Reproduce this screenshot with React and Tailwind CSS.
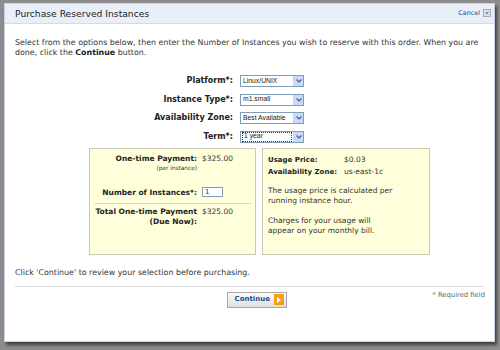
import React from "react";

function Select({ value, focused }) {
  return (
    <div className="flex h-[12px] w-[64px] items-stretch border border-[#7f9db9] bg-white">
      <div className="flex flex-1 items-center px-[1px]">
        <span
          className={
            focused
              ? "flex h-full w-full items-center border border-dotted border-[#333] px-[1px] leading-none"
              : "px-[1px] leading-none"
          }
        >
          {value}
        </span>
      </div>
      <div className="flex w-[10px] items-center justify-center border-l border-[#c3d3fd] bg-[#c9d8fc]">
        <svg width="6" height="4" viewBox="0 0 6 4">
          <path d="M0.5 0.5 L3 3 L5.5 0.5" fill="none" stroke="#4d6185" strokeWidth="1.2" />
        </svg>
      </div>
    </div>
  );
}

function FormRow({ label, value, focused }) {
  return (
    <div className="flex items-center">
      <div className="w-[225px] pr-[7px] text-right font-bold text-[8px] leading-[12px]">{label}</div>
      <div className="text-[6.8px] font-['Liberation_Sans',sans-serif]">
        <Select value={value} focused={focused} />
      </div>
    </div>
  );
}

export default function App() {
  return (
    <div className="h-[350px] w-[500px] overflow-hidden bg-[#8d8d8d] pl-[4px] pt-[3px] font-['DejaVu_Sans',sans-serif] text-[#333]">
      <div className="flex h-[339px] w-[491px] flex-col border border-[#c6d3e6] bg-white shadow-[2px_3px_3px_rgba(0,0,0,0.55)]">
        {/* Header */}
        <div className="flex h-[20px] items-center justify-between border-b border-[#cfdcee] bg-[#e9eff9] pl-[10px] pr-[3px]">
          <span className="text-[9.2px] text-[#222]">Purchase Reserved Instances</span>
          <div className="flex items-center gap-[3px]">
            <span className="text-[6.4px] text-[#1a4a8c]">Cancel</span>
            <span className="flex h-[8px] w-[8px] items-center justify-center border border-[#a9a9a9] bg-[#e4e4e4] text-[6px] leading-none text-[#555]">
              ×
            </span>
          </div>
        </div>

        {/* Body */}
        <div className="flex flex-1 flex-col px-[10px]">
          <p className="mt-[14px] whitespace-nowrap text-[7.9px] leading-[10px] text-[#333]">
            Select from the options below, then enter the Number of Instances you wish to reserve with this order. When you are
            <br />
            done, click the <b className="text-[#222]">Continue</b> button.
          </p>

          <div className="mt-[17px] flex flex-col gap-[6.5px] text-[#222]">
            <FormRow label="Platform*:" value="Linux/UNIX" />
            <FormRow label="Instance Type*:" value="m1.small" />
            <FormRow label="Availability Zone:" value="Best Available" />
            <FormRow label="Term*:" value="1 year" focused />
          </div>

          <div className="mt-[5px] ml-[74px] flex gap-[6px]">
            {/* Left box */}
            <div className="h-[107px] w-[167px] border border-[#c8c8b4] bg-[#ffffdc] pt-[5px] text-[7.5px] text-[#333]">
              <div className="flex">
                <div className="w-[107px] text-right">
                  <div className="font-bold leading-[10px] text-[#222]">One-time Payment:</div>
                  <div className="text-[5.8px] leading-[8px]">(per instance)</div>
                </div>
                <div className="pl-[5px] leading-[10px]">$325.00</div>
              </div>
              <div className="mt-[15px] flex items-center">
                <div className="w-[107px] text-right font-bold text-[#222]">Number of Instances*:</div>
                <div className="pl-[5px]">
                  <div className="flex h-[10px] w-[21px] items-center border border-[#7f9db9] bg-white pl-[2px] text-[7px] leading-none">1</div>
                </div>
              </div>
              <div className="mx-[4px] mt-[5px] border-t border-[#d9d9c4]" />
              <div className="mt-[3px] flex">
                <div className="w-[107px] text-right font-bold leading-[10px] text-[#222]">
                  <div className="whitespace-nowrap">Total One-time Payment</div>
                  <div>(Due Now):</div>
                </div>
                <div className="pl-[5px] leading-[10px]">$325.00</div>
              </div>
            </div>

            {/* Right box */}
            <div className="h-[107px] w-[168px] border border-[#c8c8b4] bg-[#ffffdc] px-[5px] pt-[5px] text-[7.5px] text-[#333]">
              <div className="flex items-baseline leading-[11px]">
                <div className="w-[76px] text-[7px] font-bold text-[#222]">Usage Price:</div>
                <div>$0.03</div>
              </div>
              <div className="flex items-baseline leading-[11px]">
                <div className="w-[76px] whitespace-nowrap text-[7px] font-bold text-[#222]">Availability Zone:</div>
                <div>us-east-1c</div>
              </div>
              <p className="mt-[8px] leading-[10px]">
                The usage price is calculated per
                <br />
                running instance hour.
              </p>
              <p className="mt-[10px] leading-[10px]">
                Charges for your usage will
                <br />
                appear on your monthly bill.
              </p>
            </div>
          </div>

          <p className="mt-[13px] text-[7.9px] leading-[10px] text-[#333]">
            Click 'Continue' to review your selection before purchasing.
          </p>
          <div className="mt-[8px] border-t border-[#dcdcdc]" />
          <div className="relative mt-[5px] flex justify-center">
            <div className="ml-[14px] flex h-[16px] w-[60px] items-center justify-between border border-[#a8a8a8] bg-gradient-to-b from-[#fbfbfb] to-[#dedede] pl-[7px] pr-[2px]">
              <span className="text-[7px] font-bold text-[#1d4c8f]">Continue</span>
              <span className="flex h-[11px] w-[10px] items-center justify-center bg-[#f6a01a]">
                <svg width="4" height="6" viewBox="0 0 4 6">
                  <path d="M0 0 L4 3 L0 6 Z" fill="#fff" />
                </svg>
              </span>
            </div>
            <span className="absolute right-[-1px] top-[-2px] text-[6.8px] text-[#666]">* Required field</span>
          </div>
        </div>
      </div>
    </div>
  );
}
